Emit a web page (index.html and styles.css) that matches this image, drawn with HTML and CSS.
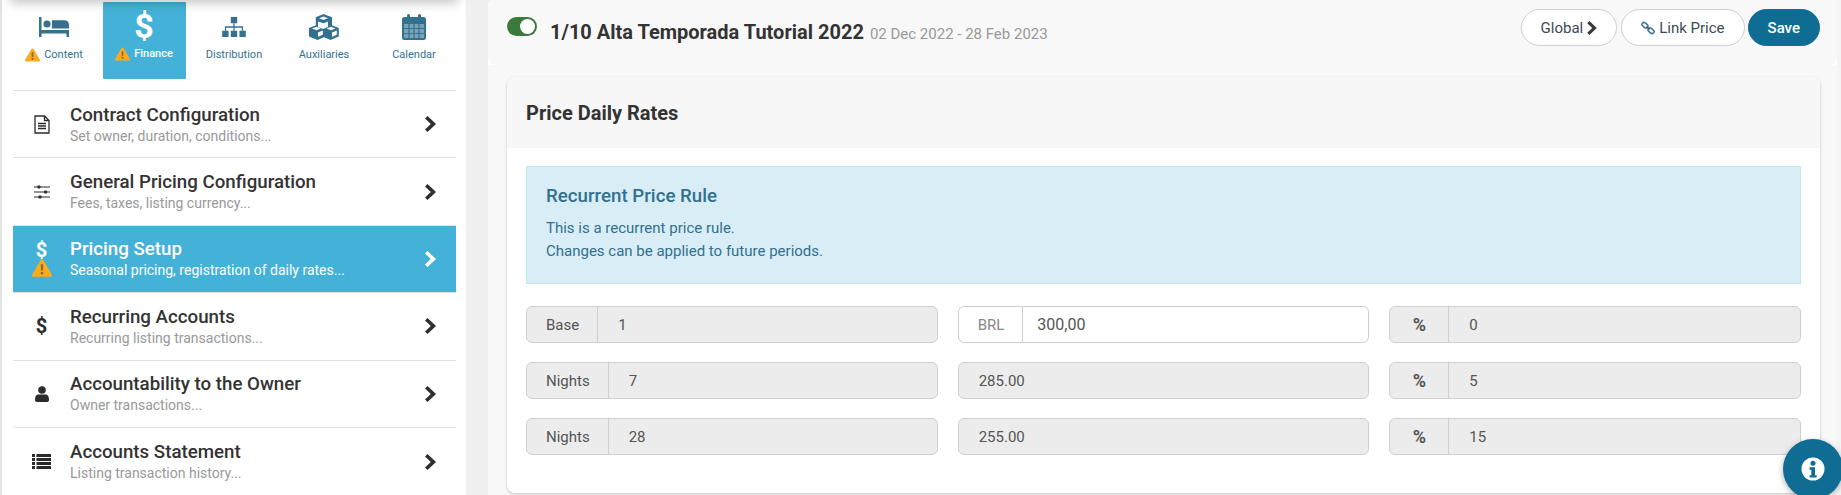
FILE: index.html
```html
<!DOCTYPE html>
<html lang="en">
<head>
<meta charset="utf-8">
<title>Price Daily Rates</title>
<link rel="stylesheet" href="styles.css">
</head>
<body>
<svg class="defs" width="0" height="0" aria-hidden="true">
  <defs>
    <symbol id="chev" viewBox="0 0 11 16"><path d="M2.500 0 11 8l-8.500 8L0 13.500 5.800 8 0 2.500z" fill="currentColor"/></symbol>
    <symbol id="warn" viewBox="0 0 16 14"><path d="M8 0c.5 0 .9.2 1.100.6l6.700 11.500c.5.900-.1 1.900-1.100 1.900H1.300C.3 14-.3 13 .2 12.100L6.900.6C7.100.2 7.500 0 8 0z" fill="#fbaa1c"/><path d="M7 4h2l-.2 5H7.200zM8 10a1.100 1.100 0 1 1 0 2.200A1.100 1.100 0 0 1 8 10z" fill="#8a6a3a"/></symbol>
  </defs>
</svg>
<div class="app">
  <aside class="side">
    <nav class="tabs">
      <a class="tab">
        <svg class="tab-ico" viewBox="0 0 30 20"><path d="M0 0h2.500v13H30v7h-2.500v-3.500h-25V20H0z" fill="currentColor"/><circle cx="8" cy="7" r="3.600" fill="currentColor"/><path d="M13 3.200h12.500c2.500 0 4.500 2 4.500 4.500v3.800H13z" fill="currentColor"/></svg>
        <span class="tab-label"><svg class="tab-warn"><use href="#warn"/></svg>Content</span>
      </a>
      <a class="tab tab-on">
        <span class="tab-dollar">$</span>
        <span class="tab-label"><svg class="tab-warn"><use href="#warn"/></svg>Finance</span>
      </a>
      <a class="tab">
        <svg class="tab-ico" viewBox="0 0 26 22"><path d="M9.500 0h7v7h-7zM0 15h7v7H0zM9.500 15h7v7h-7zM19 15h7v7h-7z" fill="currentColor"/><path d="M12.300 7h1.400v3.300h9.300V15h-1.400v-3.300h-7.900V15h-1.400v-3.300H4.400V15H3v-4.700h9.300z" fill="currentColor"/></svg>
        <span class="tab-label">Distribution</span>
      </a>
      <a class="tab">
        <svg class="tab-ico tab-ico-cube" viewBox="0 0 32 26"><path d="M15.500 0 24 3.200v8l6.800 2.800v8.500L22.500 26 16 23.300 9.500 26 1 22.500V14l6.800-2.800v-8z" fill="currentColor"/><path d="M11 4.200l4.500 1.700 4.500-1.700-4.500-1.600zM10 13l5 2 5-2V7.500l-4.500 1.700L10 7.500zM4 14.500l4.500 1.700 4.300-1.700-4.300-1.700zM18.500 14.500l4.500 1.700 4.500-1.700-4.500-1.700z" fill="#fff" opacity=".95"/><path d="M10 18.500v4.300l4.800-2v-4.200zM24 18.500v4.300l4.800-2v-4.200z" fill="#fff"/></svg>
        <span class="tab-label">Auxiliaries</span>
      </a>
      <a class="tab">
        <svg class="tab-ico tab-ico-cal" viewBox="0 0 24 26"><path d="M2.500 3H5V1.500a1.500 1.500 0 0 1 3 0V3h8V1.500a1.500 1.500 0 0 1 3 0V3h2.500A2.500 2.500 0 0 1 24 5.500v18a2.500 2.500 0 0 1-2.500 2.500h-19A2.500 2.500 0 0 1 0 23.500v-18A2.500 2.500 0 0 1 2.500 3z" fill="currentColor"/><path d="M2 10h20v14H2z" fill="#fff" opacity=".35"/><path d="M7 10v14M12 10v14M17 10v14M2 14.500h20M2 19.500h20" stroke="currentColor" stroke-width="1.200"/></svg>
        <span class="tab-label">Calendar</span>
      </a>
    </nav>
    <ul class="menu">
      <li class="item">
        <span class="item-ico"><svg class="ico-doc" viewBox="0 0 16 19"><path d="M1 1h9.500L15 5.500V18H1z M10.500 1v4.500H15 M4 8.500h8M4 11h8M4 13.500h8" fill="none" stroke="currentColor" stroke-width="1.300"/></svg></span>
        <span class="item-text"><b class="item-title">Contract Configuration</b><small class="item-sub">Set owner, duration, conditions...</small></span>
        <svg class="chev"><use href="#chev"/></svg>
      </li>
      <li class="item">
        <span class="item-ico"><svg class="ico-sl" viewBox="0 0 16 14"><path d="M0 2h16M0 7h16M0 12h16" stroke="currentColor" stroke-width="1.100"/><rect x="3.500" y="0.500" width="3" height="3" rx=".8" fill="currentColor"/><rect x="10" y="5.500" width="3" height="3" rx=".8" fill="currentColor"/><rect x="4.500" y="10.500" width="3" height="3" rx=".8" fill="currentColor"/></svg></span>
        <span class="item-text"><b class="item-title">General Pricing Configuration</b><small class="item-sub">Fees, taxes, listing currency...</small></span>
        <svg class="chev"><use href="#chev"/></svg>
      </li>
      <li class="item item-on">
        <span class="item-ico item-ico-stack"><span class="dollar">$</span><svg class="warn-big"><use href="#warn"/></svg></span>
        <span class="item-text"><b class="item-title">Pricing Setup</b><small class="item-sub">Seasonal pricing, registration of daily rates...</small></span>
        <svg class="chev"><use href="#chev"/></svg>
      </li>
      <li class="item">
        <span class="item-ico"><span class="dollar">$</span></span>
        <span class="item-text"><b class="item-title">Recurring Accounts</b><small class="item-sub">Recurring listing transactions...</small></span>
        <svg class="chev"><use href="#chev"/></svg>
      </li>
      <li class="item">
        <span class="item-ico"><svg class="ico-user" viewBox="0 0 14 16"><circle cx="7" cy="4" r="3.800" fill="currentColor"/><path d="M0 14c0-4 1.500-5.500 3.500-5.500h7C12.500 8.500 14 10 14 14c0 1.300-.8 2-2 2H2c-1.200 0-2-.7-2-2z" fill="currentColor"/></svg></span>
        <span class="item-text"><b class="item-title">Accountability to the Owner</b><small class="item-sub">Owner transactions...</small></span>
        <svg class="chev"><use href="#chev"/></svg>
      </li>
      <li class="item">
        <span class="item-ico"><svg class="ico-list" viewBox="0 0 19 15"><path d="M0 0h3v3H0zM4.500 0H19v3H4.500zM0 4h3v3H0zM4.500 4H19v3H4.500zM0 8h3v3H0zM4.500 8H19v3H4.500zM0 12h3v3H0zM4.500 12H19v3H4.500z" fill="currentColor"/></svg></span>
        <span class="item-text"><b class="item-title">Accounts Statement</b><small class="item-sub">Listing transaction history...</small></span>
        <svg class="chev"><use href="#chev"/></svg>
      </li>
    </ul>
  </aside>
  <main class="main">
    <div class="head-wrap">
      <header class="head">
        <span class="switch"><span class="knob"></span></span>
        <h1 class="title">1/10 Alta Temporada Tutorial 2022</h1>
        <span class="dates">02 Dec 2022 - 28 Feb 2023</span>
        <div class="actions">
          <button class="btn">Global <svg class="btn-chev"><use href="#chev"/></svg></button>
          <button class="btn"><svg class="link-ico" viewBox="0 0 14 14"><g fill="none" stroke="#3a7ba0" stroke-width="1.600"><rect x=".9" y="2.200" width="6.500" height="4" rx="2" transform="rotate(40 4 4)"/><rect x="6.600" y="7.800" width="6.500" height="4" rx="2" transform="rotate(40 10 10)"/></g><path d="M5.500 5.500l3 3" stroke="#555" stroke-width="1.500"/></svg> Link Price</button>
          <button class="btn btn-save">Save</button>
        </div>
      </header>
    </div>
    <section class="card">
      <h2 class="card-head">Price Daily Rates</h2>
      <div class="card-body">
        <div class="alert">
          <h3 class="alert-title">Recurrent Price Rule</h3>
          <p class="alert-line">This is a recurrent price rule.</p>
          <p class="alert-line">Changes can be applied to future periods.</p>
        </div>
        <div class="grid">
          <div class="field"><span class="addon">Base</span><span class="val">1</span></div>
          <div class="field field-on"><span class="addon">BRL</span><span class="val">300,00</span></div>
          <div class="field"><span class="addon addon-pct">%</span><span class="val">0</span></div>
          <div class="field"><span class="addon">Nights</span><span class="val">7</span></div>
          <div class="field"><span class="val">285.00</span></div>
          <div class="field"><span class="addon addon-pct">%</span><span class="val">5</span></div>
          <div class="field"><span class="addon">Nights</span><span class="val">28</span></div>
          <div class="field"><span class="val">255.00</span></div>
          <div class="field"><span class="addon addon-pct">%</span><span class="val">15</span></div>
        </div>
      </div>
    </section>
  </main>
</div>
<button class="fab" aria-label="Info"><svg viewBox="0 0 24 24"><circle cx="12" cy="12" r="11.500" fill="#fff"/><circle cx="12" cy="6.300" r="2.500" fill="#0f6d94"/><path d="M8.500 10.200h5.500v8h1.700v2.400H8.500v-2.400h1.800v-5.500H8.500z" fill="#0f6d94"/></svg></button>
</body>
</html>
```
FILE: styles.css
```css
* { box-sizing: border-box; }
html, body { margin: 0; height: 495px; overflow: hidden; }
body { font-family: Roboto, "Liberation Sans", sans-serif; background: #f0f0f0; color: #333; position: relative; }
.defs { position: absolute; }
.app { display: flex; height: 495px; }

.side { width: 464px; margin-left: 2px; background: #fff; padding: 2px 10px 0 11px; flex: none; position: relative; box-shadow: -2px 0 0 #e2e2e2; }
.side::before { content: ""; position: absolute; left: 8px; right: 8px; top: -12px; height: 12px; box-shadow: 0 2px 12px rgba(0,0,0,.28); }
.tabs { display: flex; height: 89px; padding-bottom: 11px; border-bottom: 1px solid #e0e0e0; }
.tab { width: 90px; display: flex; flex-direction: column; align-items: center; color: #34718f; font-size: 11px; padding-top: 12px; flex: none; }
.tab:first-child { margin-left: -4px; }
.tab-on { width: 83px; margin: 0 3.500px; background: #44b2d8; color: #fff; padding-top: 9px; border-radius: 1px; font-weight: 500; }
.tab-ico { width: 30px; height: 20px; margin-top: 3px; margin-bottom: 11px; display: block; flex: none; }
.tab-ico-cube { width: 32px; height: 26px; margin-top: 0; margin-bottom: 8px; }
.tab-ico-cal { width: 24px; height: 26px; margin-top: 0; margin-bottom: 8px; }
.tab-dollar { font-size: 34px; line-height: 30px; height: 30px; font-weight: 700; margin-bottom: 6px; }
.tab-label { display: flex; align-items: center; line-height: 14px; height: 14px; white-space: nowrap; }
.tab-warn { width: 15px; height: 14px; margin-right: 4px; }

.menu { list-style: none; margin: 0; padding: 0; }
.item { height: 67.400px; display: flex; align-items: center; border-bottom: 1px solid #e0e0e0; }
.item:last-child { border-bottom: 0; }
.item-ico { width: 57px; flex: none; display: flex; justify-content: center; align-items: center; color: #2b2b2b; }
.item-text { flex: 1; display: flex; flex-direction: column; padding-top: 2px; }
.item-title { font-size: 18.720px; font-weight: 500; line-height: 21px; color: #333; }
.item-sub { font-size: 14px; line-height: 19px; color: #999; margin-top: 1px; }
.chev { width: 11px; height: 16px; margin-right: 20px; color: #2f2f2f; flex: none; }
.item-on { background: #44b2d8; }
.item-on .item-title, .item-on .item-sub, .item-on .chev, .item-on .dollar { color: #fff; }
.item-ico-stack { flex-direction: column; }
.dollar { font-size: 20px; font-weight: 700; line-height: 20px; color: #2b2b2b; }
.item-ico-stack .dollar { line-height: 18px; }
.warn-big { width: 20px; height: 18px; }
.ico-doc { width: 16px; height: 19px; }
.ico-sl { width: 16px; height: 14px; }
.ico-user { width: 14px; height: 16px; }
.ico-list { width: 19px; height: 15px; }

.main { flex: 1; min-width: 0; margin-left: 22px; padding: 0 17px 0 19px; background: #f8f8f8; border-right: 4px solid #f4f4f4; border-top-left-radius: 6px; overflow: hidden; }
.head-wrap { background: #fff; height: 65px; margin: 0 -17px 12px -19px; }
.head { height: 65px; padding: 0 17px 0 19px; display: flex; align-items: flex-start; background: #f8f8f8; border-radius: 0 0 8px 8px; }
.switch { width: 30px; height: 19px; border-radius: 10px; background: #3c7a3c; margin: 17px 13px 0 0; position: relative; flex: none; }
.knob { position: absolute; right: 2px; top: 2px; width: 15px; height: 15px; background: #fff; border-radius: 50%; }
.title { font-size: 20px; font-weight: 700; margin: 20px 0 0; line-height: 24px; color: #333; }
.dates { font-size: 15px; color: #999; margin: 25px 0 0 6px; line-height: 18px; }
.actions { margin-left: auto; display: flex; gap: 4px; padding-top: 9px; }
.btn { height: 37px; border-radius: 19px; border: 1px solid #cfcfcf; background: #fff; font: 400 15px Roboto, "Liberation Sans", sans-serif; color: #3d4a55; padding: 0 19px; display: inline-flex; align-items: center; gap: 4px; white-space: nowrap; }
.btn-save { background: #0f6d94; color: #fff; border-color: #0f6d94; font-weight: 500; margin-left: -1px; }
.btn-chev { width: 10px; height: 14px; color: #3a3a3a; }
.link-ico { width: 14px; height: 14px; }

.card { background: #fff; border-radius: 8px; box-shadow: 0 1px 3px rgba(0,0,0,.22); height: 416px; overflow: hidden; }
.card-head { margin: 0; height: 71px; background: #f7f7f7; padding: 0 19px; display: flex; align-items: center; font-size: 20px; font-weight: 700; color: #333; }
.card-body { padding: 18px 19px 0; }
.alert { height: 118px; background: #d9edf7; border: 1px solid #bce8f1; padding: 19px 19px 0; color: #31708f; }
.alert-title { margin: 0 0 10px; font-size: 18.720px; font-weight: 500; line-height: 21px; color: #31708f; }
.alert-line { margin: 0; font-size: 15px; line-height: 23px; color: #31708f; }
.grid { display: grid; grid-template-columns: repeat(3, 1fr); gap: 19px 20px; margin-top: 22px; }
.field { height: 37px; background: #ececec; border: 1px solid #cfcfcf; border-radius: 6px; display: flex; align-items: center; font-size: 15px; color: #555; overflow: hidden; }
.field-on { background: #fff; }
.addon { height: 100%; display: flex; align-items: center; padding: 0 18px 0 19px; border-right: 1px solid #cfcfcf; flex: none; }
.addon-pct { font-weight: 700; font-size: 18px; width: 59px; justify-content: center; padding: 0; }
.field-on .addon { color: #888; }
.val { padding-left: 20px; }
.field-on .val { padding-left: 14px; font-size: 16px; }

.fab { position: absolute; right: -2px; top: 439px; width: 60px; height: 60px; padding: 0; background: #0f6d94; border: 0; border-radius: 50%; box-shadow: 0 2px 6px rgba(0,0,0,.3); display: flex; align-items: center; justify-content: center; }
.fab svg { width: 24px; height: 24px; display: block; }
```
